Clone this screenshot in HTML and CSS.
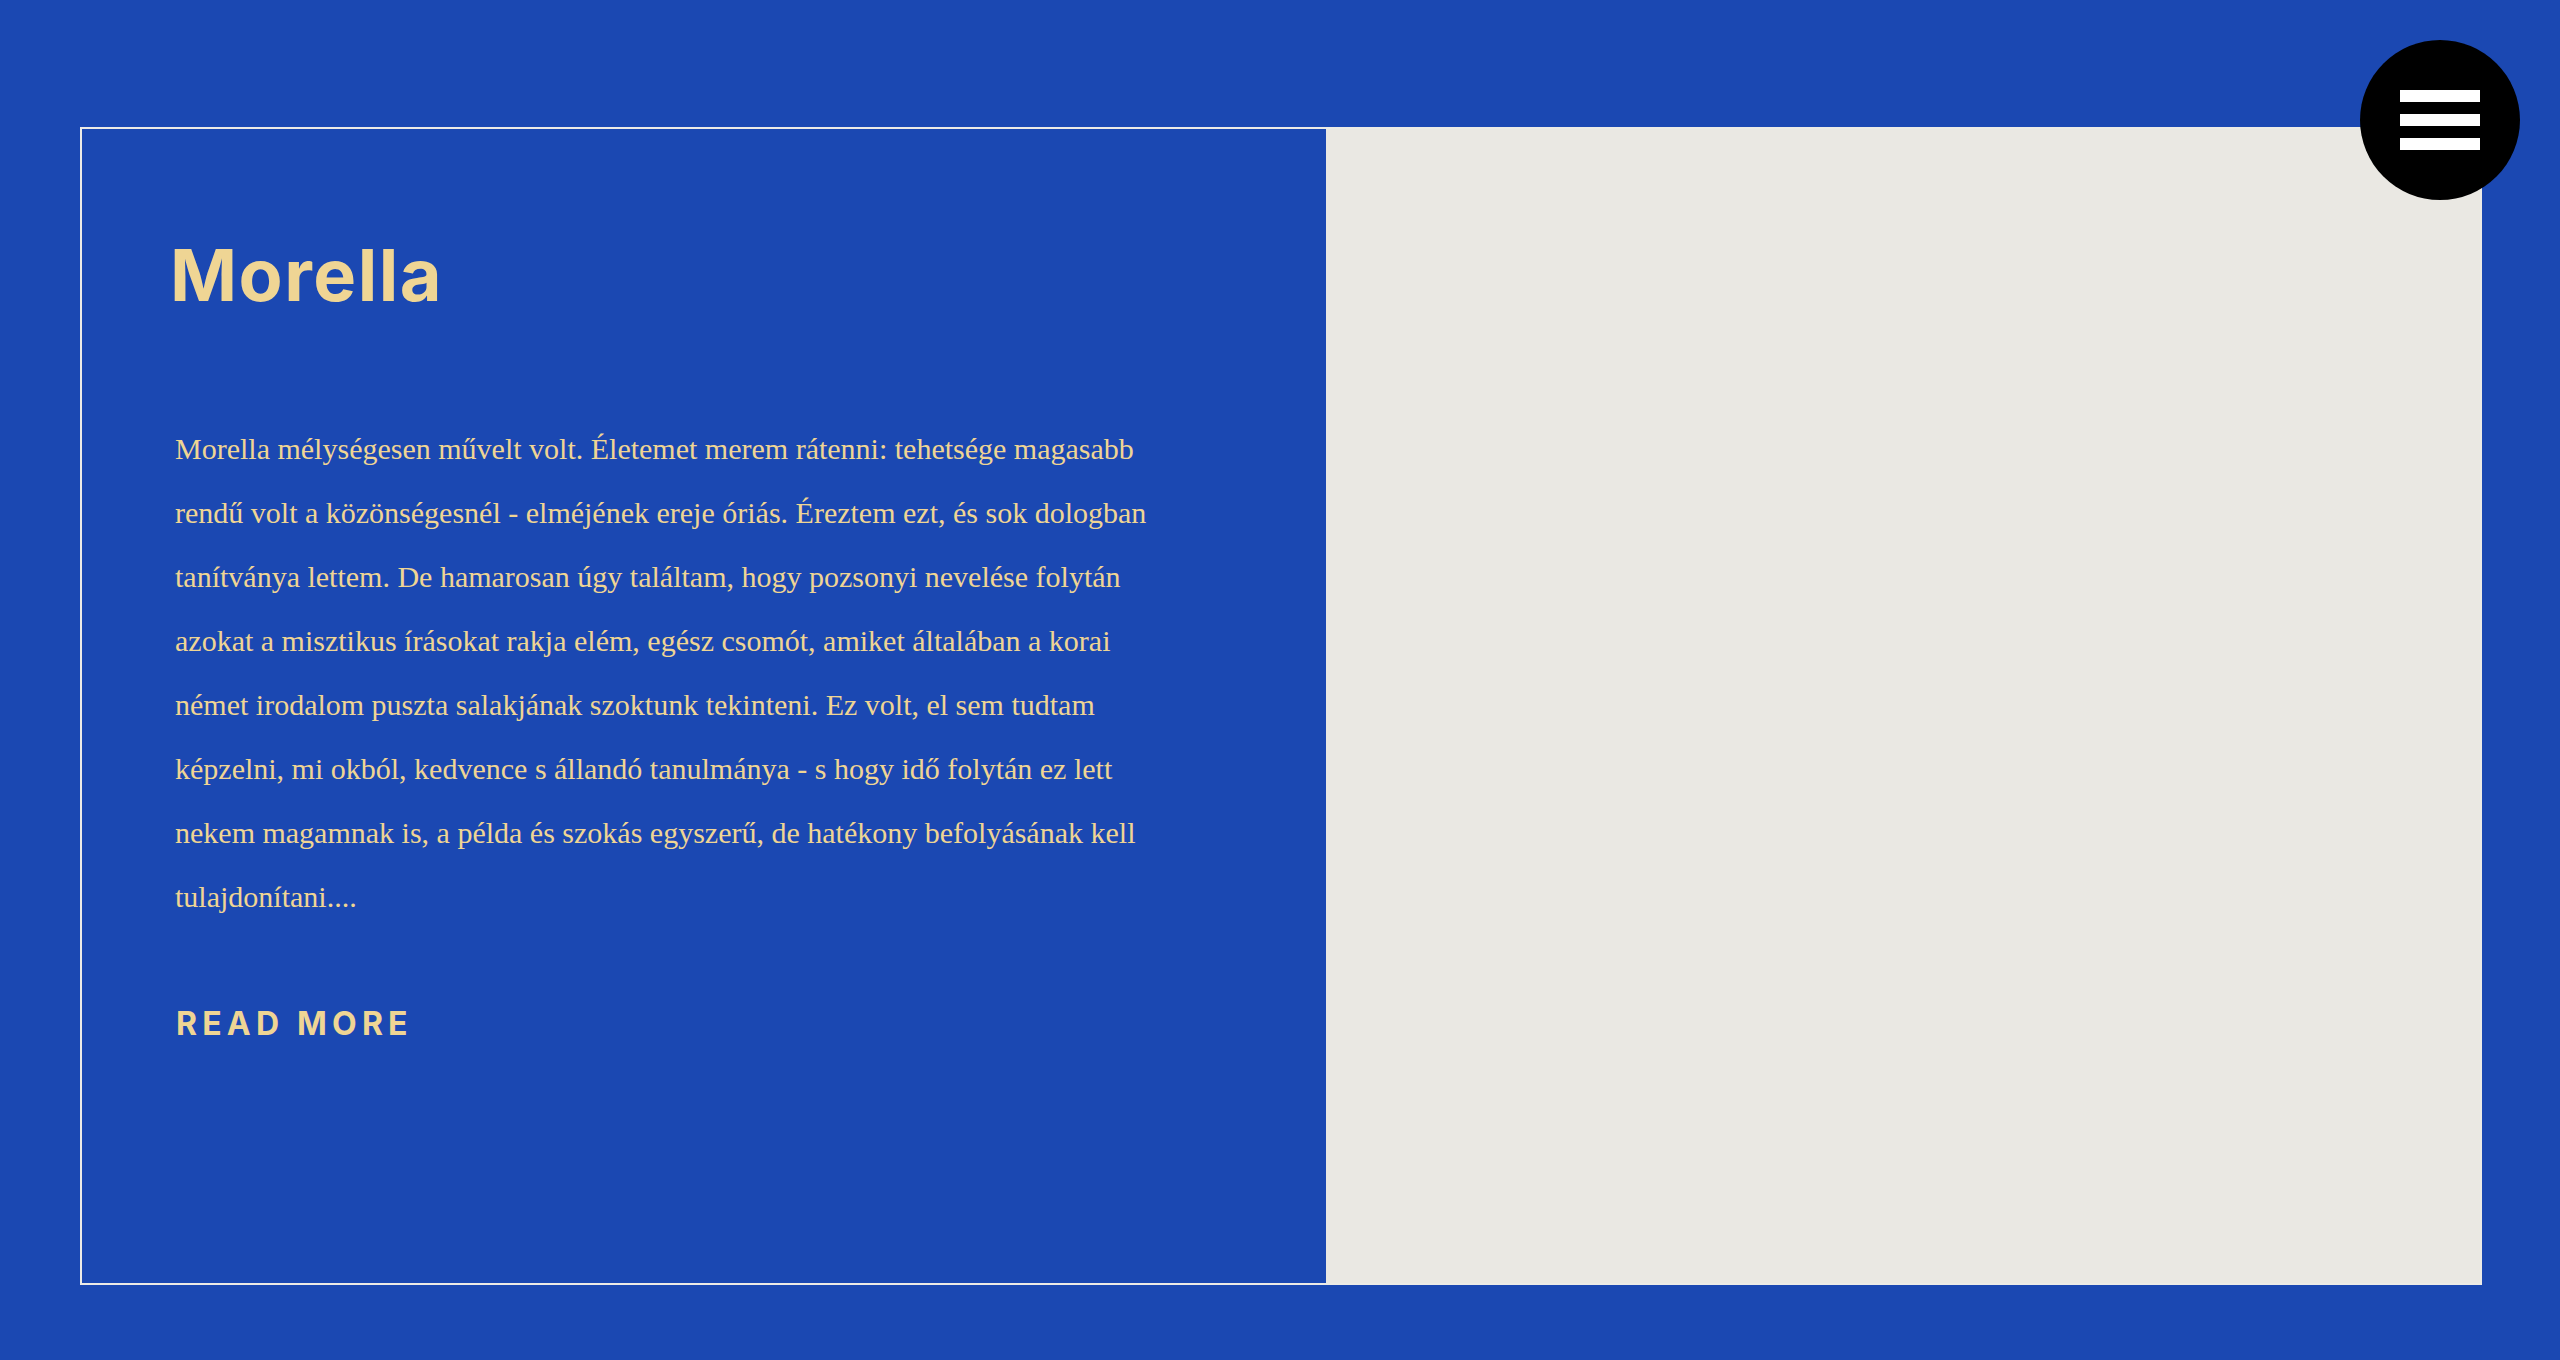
FILE: index.html
```html
<!DOCTYPE html>
<html lang="hu">
<head>
<meta charset="utf-8">
<title>Morella</title>
<link rel="stylesheet" href="styles.css">
</head>
<body>
<main class="page">
  <article class="card">
    <div class="card-text">
      <h1 class="title">Morella</h1>
      <p class="excerpt">Morella mélységesen művelt volt. Életemet merem rátenni: tehetsége magasabb rendű volt a közönségesnél - elméjének ereje óriás. Éreztem ezt, és sok dologban tanítványa lettem. De hamarosan úgy találtam, hogy pozsonyi nevelése folytán azokat a misztikus írásokat rakja elém, egész csomót, amiket általában a korai német irodalom puszta salakjának szoktunk tekinteni. Ez volt, el sem tudtam képzelni, mi okból, kedvence s állandó tanulmánya - s hogy idő folytán ez lett nekem magamnak is, a példa és szokás egyszerű, de hatékony befolyásának kell tulajdonítani....</p>
      <a class="read-more" href="#">Read more</a>
    </div>
    <div class="card-media"></div>
  </article>
</main>
<button class="menu-btn" aria-label="Menu">
  <span class="bar"></span>
  <span class="bar"></span>
  <span class="bar"></span>
</button>
</body>
</html>
```

FILE: styles.css
```css
html, body {
  margin: 0;
  padding: 0;
}
body {
  background: #1b48b2;
  width: 2560px;
  height: 1360px;
  overflow: hidden;
}
.page {
  padding: 127px 78px 0 80px;
}
.card {
  display: grid;
  grid-template-columns: 1244px 1fr;
  height: 1154px;
  border: 2px solid #ecebe6;
}
.card-text {
  padding: 110px 0 0 74px;
}
.title {
  margin: 0 0 0 14px;
  font-family: "Inter", "Liberation Sans", sans-serif;
  font-weight: 700;
  font-size: 72px;
  line-height: 1;
  letter-spacing: 1.5px;
  color: #efd594;
}
.excerpt {
  margin: 106px 0 0 19px;
  width: 980px;
  font-family: "Liberation Serif", serif;
  font-size: 30px;
  line-height: 64px;
  color: #efd594;
}
.read-more {
  display: inline-block;
  margin: 75px 0 0 20px;
  font-family: "Inter", "Liberation Sans", sans-serif;
  font-weight: 700;
  font-size: 32px;
  letter-spacing: 5.2px;
  text-transform: uppercase;
  text-decoration: none;
  color: #efd594;
}
.card-media {
  background: #eae8e3;
}
.menu-btn {
  position: absolute;
  left: 2360px;
  top: 40px;
  width: 160px;
  height: 160px;
  border: 0;
  border-radius: 50%;
  background: #000;
  padding: 0;
  display: flex;
  flex-direction: column;
  align-items: center;
  justify-content: center;
  gap: 12px;
}
.bar {
  display: block;
  width: 80px;
  height: 12px;
  background: #fff;
}
```
